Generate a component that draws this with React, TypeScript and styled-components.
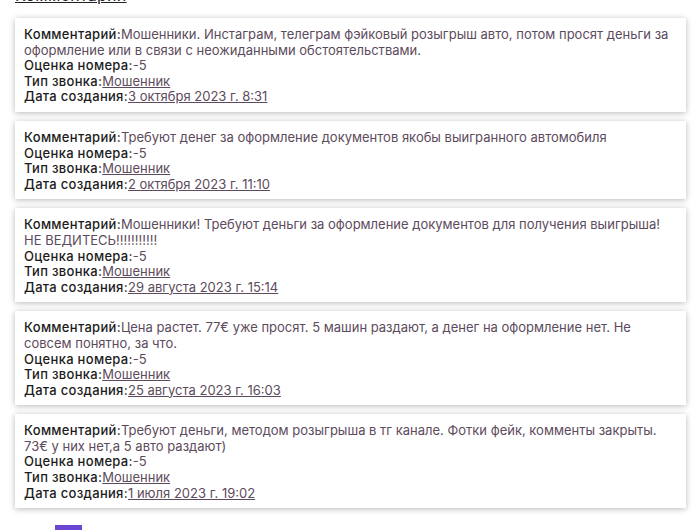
import React from "react";
import styled, { createGlobalStyle } from "styled-components";

interface IReview {
    comment: string;
    rating: number;
    callType: string;
    created: string;
}

const reviews: IReview[] = [
    {
        comment:
            "Мошенники. Инстаграм, телеграм фэйковый розыгрыш авто, потом просят деньги за оформление или в связи с неожиданными обстоятельствами.",
        rating: -5,
        callType: "Мошенник",
        created: "3 октября 2023 г. 8:31",
    },
    {
        comment: "Требуют денег за оформление документов якобы выигранного автомобиля",
        rating: -5,
        callType: "Мошенник",
        created: "2 октября 2023 г. 11:10",
    },
    {
        comment:
            "Мошенники! Требуют деньги за оформление документов для получения выигрыша! НЕ ВЕДИТЕСЬ!!!!!!!!!!!",
        rating: -5,
        callType: "Мошенник",
        created: "29 августа 2023 г. 15:14",
    },
    {
        comment:
            "Цена растет. 77€ уже просят. 5 машин раздают, а денег на оформление нет. Не совсем понятно, за что.",
        rating: -5,
        callType: "Мошенник",
        created: "25 августа 2023 г. 16:03",
    },
    {
        comment:
            "Требуют деньги, методом розыгрыша в тг канале. Фотки фейк, комменты закрыты. 73€ у них нет,а 5 авто раздают)",
        rating: -5,
        callType: "Мошенник",
        created: "1 июля 2023 г. 19:02",
    },
];

const App: React.FC = () => {
    return (
        <>
            <GlobalStyle />
            <Page>
                <Heading href="#">Комментарии</Heading>
                <List>
                    {reviews.map((r, i) => (
                        <Card key={i}>
                            <Row>
                                <Label>Комментарий:</Label>
                                <Value>{r.comment}</Value>
                            </Row>
                            <Row>
                                <Label>Оценка номера:</Label>
                                <Value>{r.rating}</Value>
                            </Row>
                            <Row>
                                <Label>Тип звонка:</Label>
                                <LinkValue href="#">{r.callType}</LinkValue>
                            </Row>
                            <Row>
                                <Label>Дата создания:</Label>
                                <LinkValue href="#">{r.created}</LinkValue>
                            </Row>
                        </Card>
                    ))}
                </List>
                <Pager>
                    <PageButton />
                </Pager>
            </Page>
        </>
    );
};

const GlobalStyle = createGlobalStyle`
    body {
        margin: 0;
        background: #fff;
        font-family: Inter, "Noto Sans", sans-serif;
        overflow: hidden;
    }
`;

const Page = styled.div`
    padding: 0 14px 0 15px;
    margin-top: -15px;
`;

const Heading = styled.a`
    display: inline-block;
    font-size: 16px;
    line-height: 20px;
    letter-spacing: 0.3px;
    color: #222;
    text-decoration: underline;
    margin-bottom: 13px;
`;

const List = styled.div`
    display: flex;
    flex-direction: column;
    gap: 9px;
`;

const Card = styled.div`
    background: #fff;
    padding: 9px 9px 7px;
    box-shadow: 0 1px 6px rgba(0, 0, 0, 0.28);
`;

const Row = styled.div`
    font-size: 13px;
    line-height: 15.6px;
`;

const Label = styled.span`
    color: #1c1c1c;
    font-weight: 500;
    letter-spacing: 0.3px;
`;

const Value = styled.span`
    color: #5c4b5c;
`;

const LinkValue = styled.a`
    color: #5c4b5c;
    text-decoration: underline;
`;

const Pager = styled.div`
    display: flex;
    padding: 17px 0 0 40px;
`;

const PageButton = styled.div`
    width: 27px;
    height: 27px;
    background: #6a45d4;
`;

export default App;
